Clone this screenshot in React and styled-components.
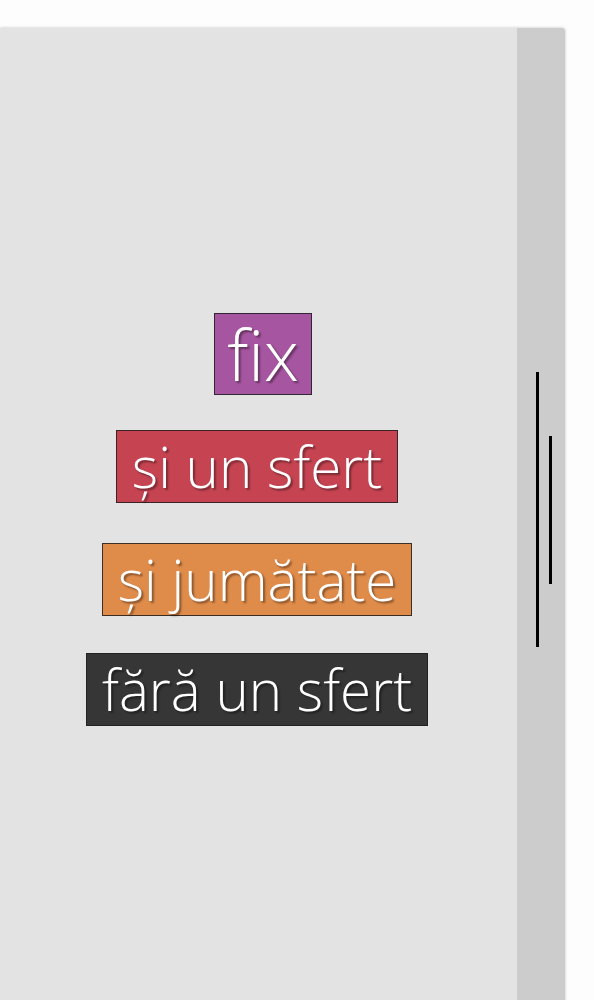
import React from 'react';
import styled, { createGlobalStyle } from 'styled-components';

const GlobalStyle = createGlobalStyle`
    html, body {
        margin:0;
        padding:0;
        background:#fdfdfd;
    }
`;

const Card = styled.div`
    margin-top:28px;
    width:565px;
    height:982px;
    display:flex;
    border-radius:0 3px 3px 0;
    box-shadow:0 0 3px rgba(0, 0, 0, 0.25);
    overflow:hidden;
`;

const Stage = styled.div`
    flex:1;
    background:#e3e3e3;
    display:flex;
    flex-direction:column;
    align-items:center;
    justify-content:center;
    padding-right:3px;
`;

const Label = styled.div`
    background:${props => props.color};
    border:1px solid rgba(30, 30, 30, 0.85);
    color:#fff;
    font-family:"Open Sans", "Liberation Sans", sans-serif;
    font-weight:300;
    font-size:${props => props.big ? '70px' : '56.5px'};
    line-height:${props => props.big ? '80px' : '71px'};
    padding:0 ${props => props.big ? '12px' : '15px'};
    margin-left:${props => props.shift || 0}px;
    margin-bottom:${props => props.gap}px;
    text-shadow:2px 2px 2px rgba(0, 0, 0, 0.4);
    white-space:nowrap;
`;

const Side = styled.div`
    width:48px;
    background:#cccccc;
    display:flex;
    align-items:flex-start;
    padding-left:19px;
    box-sizing:border-box;
    gap:10px;
`;

const Bar = styled.div`
    width:3px;
    margin-top:${props => props.top}px;
    height:${props => props.length}px;
    background:#000;
`;

const labels = [
    { text: 'fix', color: '#a655a0', big: true, gap: 35, shift: 12 },
    { text: 'și un sfert', color: '#c64452', gap: 40 },
    { text: 'și jumătate', color: '#df8b4a', gap: 37 },
    { text: 'fără un sfert', color: '#363636', gap: 0 },
];

const App = () => {
    return (
        <>
            <GlobalStyle />
            <Card>
                <Stage>
                    {labels.map(label => (
                        <Label key={label.text} color={label.color} big={label.big} gap={label.gap} shift={label.shift}>
                            {label.text}
                        </Label>
                    ))}
                </Stage>
                <Side>
                    <Bar top={344} length={275} />
                    <Bar top={408} length={148} />
                </Side>
            </Card>
        </>
    );
};

export default App;
